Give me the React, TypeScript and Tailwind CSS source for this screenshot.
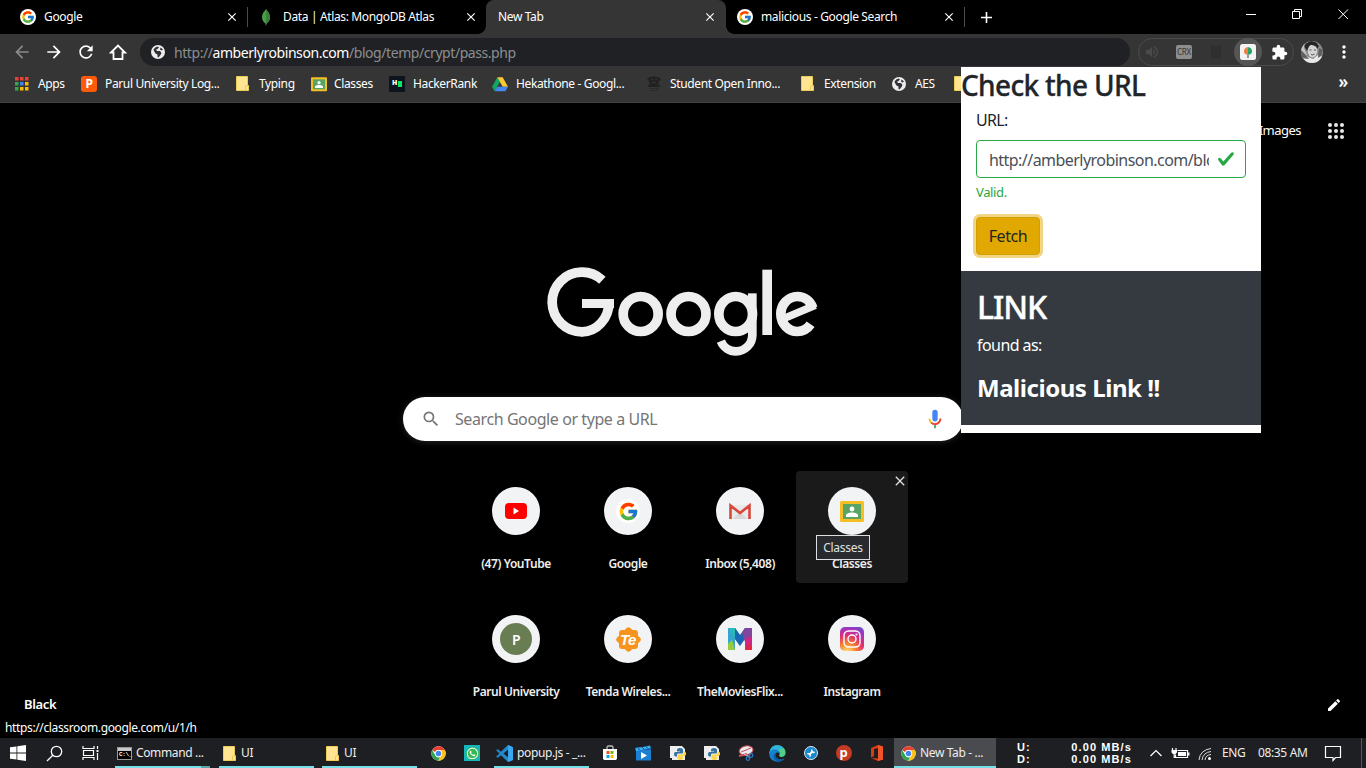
import React from "react";
import { FcGoogle } from "react-icons/fc";
import { FaWhatsapp } from "react-icons/fa";
import {
  MdArrowBack, MdArrowForward, MdRefresh, MdExtension,
  MdMoreVert, MdClose, MdSearch, MdEdit, MdVolumeUp, MdAdd,
} from "react-icons/md";

const GoogleIcon = ({ size = 16 }: { size?: number }) => (
  <span className={`flex items-center justify-center rounded-full bg-white ${size > 16 ? "size-6" : "size-4"}`}>
    <FcGoogle size={size > 16 ? 21 : 14} />
  </span>
);

const Globe = () => (
  <svg width="14" height="14" viewBox="0 0 14 14" className="shrink-0">
    <circle cx="7" cy="7" r="7" fill="#ececec" />
    <path d="M2.500 4.500Q4 2 6.500 1.500L8 2.500 6.500 4 5 4.500l1 1.500h3l1.500 2-1 2-2 2.500-1-.5V9.500L4.500 8.500 3 6z" fill="#303134" />
    <path d="M9.500 2.500 12 4.500l-1.500 1-1.500-1z" fill="#303134" />
  </svg>
);

const Home = () => (
  <svg width="18" height="18" viewBox="0 0 18 18" fill="none" stroke="#fff" strokeWidth="1.800" className="shrink-0">
    <path d="M2 9.500 9 2.500l7 7h-2.500V16h-9V9.500z" strokeLinejoin="miter" />
  </svg>
);

const Folder = () => (
  <svg width="13" height="15" viewBox="0 0 13 15" className="shrink-0">
    <path d="M.5.5h11v9h1v5H.5z" fill="#ffe591" stroke="#eecb55" />
    <path d="M9.500 14v-4h2V9" fill="none" stroke="#eecb55" />
  </svg>
);

const ClassIcon = ({ size }: { size: number }) => (
  <svg width={size} height={size} viewBox="0 0 24 24">
    <rect y="2" width="24" height="21" rx="1.500" fill="#f5be25" />
    <rect x="3" y="5" width="18" height="15" fill="#57a464" />
    <circle cx="12" cy="10" r="2.400" fill="#fff" />
    <path d="M6 18v-1.500c0-2 3-3 6-3s6 1 6 3V18z" fill="#fff" />
  </svg>
);

const AppsColor = () => {
  const c = ["#ea4335", "#ea4335", "#ea4335", "#34a853", "#4285f4", "#fbbc05", "#34a853", "#fbbc05", "#fbbc05"];
  return (
    <svg width="14" height="14">
      {c.map((f, i) => (
        <rect key={i} x={(i % 3) * 5} y={Math.floor(i / 3) * 5} width="3.500" height="3.500" fill={f} />
      ))}
    </svg>
  );
};

const Drive = () => (
  <svg width="16" height="16" viewBox="0 0 24 24">
    <path d="M8 2 0 16l4 7 8-14z" fill="#12a463" />
    <path d="M8 2h8l8 14h-8z" fill="#fcc934" />
    <path d="M8 16h16l-4 7H4z" fill="#4688f1" />
  </svg>
);

const Emblem = () => (
  <svg width="16" height="16" viewBox="0 0 16 16" fill="#222">
    <path d="M3 1h3l2-1 2 1h3l2 3-2 1v2l-2 1 3 1v2H2V9l3-1-2-1V5L1 4z" />
    <path d="M3 12h10v1H3zM4 14h8v1H4z" fill="#2a2a2a" />
    <path d="M5 3h2v1H5zM9 3h2v1H9zM6 6h4v1H6z" fill="#333" />
  </svg>
);

const Leaf = () => (
  <svg width="10" height="17" viewBox="0 0 10 17">
    <path d="M5 0c1 2 4 4 4 8.500 0 3-2 5-3.500 6l-.3 2h-.5l-.3-2C3 13.500 1 11.500 1 8.500 1 4 4 2 5 0z" fill="#499d4a" />
    <path d="M5 0c1 2 4 4 4 8.500 0 3-2 5-3.500 6H5z" fill="#3a8139" />
  </svg>
);

const Chrome = () => (
  <svg width="15" height="15" viewBox="0 0 24 24">
    <circle cx="12" cy="12" r="11.500" fill="#fff" />
    <path d="M12 .5a11.500 11.500 0 0 1 10 5.800H12a5.700 5.700 0 0 0-5.200 3.500L2 6.300A11.500 11.500 0 0 1 12 .5z" fill="#e94235" />
    <path d="M22 6.300A11.500 11.500 0 0 1 11.500 23.500l5.400-8.600A5.700 5.700 0 0 0 12 6.300z" fill="#fbc116" />
    <path d="M2 6.300 7 15a5.700 5.700 0 0 0 7.500 2.500l-3 6A11.500 11.500 0 0 1 2 6.300z" fill="#32a350" />
    <circle cx="12" cy="12" r="5.500" fill="#fff" />
    <circle cx="12" cy="12" r="4.400" fill="#4285f4" />
  </svg>
);

const VsCode = () => (
  <svg width="17" height="17" viewBox="0 0 24 24">
    <path d="m17 0 7 3v18l-7 3L7 14.500 2.500 18 0 16.700 5 12 0 7.300 2.500 6 7 9.500zm0 6.700L10.500 12l6.500 5.300z" fill="#2489ca" />
    <path d="m17 0 7 3v18l-7 3z" fill="#3aa7ee" />
  </svg>
);

const Py = () => (
  <span className="relative flex h-4 w-4 items-center justify-center">
    <svg width="16" height="16" className="absolute">
      <path d="M0 1h12l3 3v11H2V13H0z" fill="#eee" />
    </svg>
    <svg width="12" height="12" viewBox="0 0 24 24" className="absolute left-1 top-[3px]">
      <path d="M12 0c-5 0-6 2-6 4v3h6v1H3C1 8 0 10 0 12.500S1 17 3 17h3v-3c0-2 1-3 3-3h6c2 0 3-1 3-3V4c0-2-1-4-6-4z" fill="#3571a3" />
      <path d="M12 24c5 0 6-2 6-4v-3h-6v-1h9c2 0 3-2 3-4.500S23 7 21 7h-2v3c0 2-1 3-3 3h-6c-2 0-3 1-3 3v4c0 2 1 4 5 4z" fill="#ffd541" />
    </svg>
  </span>
);

const Store = () => (
  <svg width="16" height="16" viewBox="0 0 16 16">
    <path d="M5 5V2.500Q5 1 6.500 1h3Q11 1 11 2.500V5" fill="none" stroke="#bbb" strokeWidth="1.300" />
    <path d="M1 4h14v9.500l-1 1.500H2l-1-1.500z" fill="#fff" />
    <path d="M4.500 6h3v3h-3z" fill="#f25022" /><path d="M8.500 6h3v3h-3z" fill="#7fba00" />
    <path d="M4.500 10h3v3h-3z" fill="#00a4ef" /><path d="M8.500 10h3v3h-3z" fill="#ffb900" />
  </svg>
);

const Movies = () => (
  <svg width="17" height="16" viewBox="0 0 17 16">
    <path d="M1 5h15v10.500H1z" fill="#1c7fd2" />
    <path d="M1 5h15V2H1z" fill="#1560a4" />
    <path d="m0 3.500 15-3 .7 2.500L1 6z" fill="#38b3ee" />
    <path d="m3 3 2 2.300M7 2l2 2.300M11 1.300l2 2.200" stroke="#0f5192" />
    <path d="m6 7 6 3.500L6 14z" fill="#fff" />
  </svg>
);

const Snip = () => (
  <svg width="17" height="16" viewBox="0 0 17 16">
    <ellipse cx="9" cy="5.500" rx="7" ry="4.500" fill="#e9e9ee" stroke="#bf4450" transform="rotate(-12 9 5)" />
    <path d="m4 7 10-4" stroke="#c94d55" />
    <path d="m2 11 8-2" stroke="#d4505a" strokeWidth="2" />
    <path d="m7 9 6 3M13 8l-1 5" stroke="#bcc" />
    <circle cx="14" cy="10.500" r="1.800" fill="none" stroke="#2a7fd0" strokeWidth="1.200" />
    <circle cx="11" cy="13.500" r="1.800" fill="none" stroke="#2a7fd0" strokeWidth="1.200" />
  </svg>
);

const Edge = () => (
  <svg width="17" height="17" viewBox="0 0 24 24">
    <path d="M.5 13C1 4 6 .5 12 .5S23.500 5 23.500 11c0 4-3 6-6 6-3 0-4-2-2.500-4 1-4-4-6-8-5.500C4 8 2 9 .5 13z" fill="#4fcf8a" />
    <path d="M.5 13C1 4 6 .5 12 .5c4 0 7 2 9 4.500-4-1-6 0-7 4-2-2-5-2-8-1-3 1-4.500 2-5.500 5z" fill="#2db4e0" />
    <path d="M.5 13c0-4 3-6.500 7-6.500S15 9 15 13c-1-3-5-3-6 0-1 5 4 8 8 7.500 2 0 4-1 5-1.500-2 3-6 4.500-10 4.500C5 23.500.5 18.500.5 13z" fill="#1680c9" />
    <path d="M9 11c-4 3-3 9 2 12.500 4 .3 8-1 11-4.500-5 2.500-9.500 1.500-11.500-1.500C9 15 8.500 13 9 11z" fill="#0c59a4" />
  </svg>
);

const Wrench = () => (
  <svg width="16" height="16" viewBox="0 0 16 16">
    <circle cx="8" cy="8" r="6.500" fill="#1b87cf" stroke="#d8e9f5" />
    <path d="m6 10 4-4" stroke="#fff" strokeWidth="1.800" />
    <path d="M9.200 4.300a1.800 1.800 0 1 0 2.600 2.600M4.200 9.200a1.800 1.800 0 1 1 2.600 2.600" fill="none" stroke="#fff" strokeWidth="1.100" />
  </svg>
);

const Office = () => (
  <svg width="14" height="16" viewBox="0 0 14 16">
    <path d="M8 0 13 1.500v13L8 16l-7-3 7 .5V3L4 4v7l-3 1.500V3z" fill="#dc3b12" />
    <path d="m8 0 5 1.500v13L8 16z" fill="#f4532a" />
  </svg>
);

const GoogleWordmark = () => (
  <svg width="300" height="110" viewBox="0 0 900 330" fill="none" stroke="#eee" strokeWidth="29" role="img" aria-label="Google">
    <circle cx="156" cy="141" r="89.500" pathLength="360" strokeDasharray="224 136" transform="rotate(89 156 141)" />
    <ellipse cx="156" cy="141" rx="81" ry="89.500" pathLength="360" strokeDasharray="91 269" />
    <rect x="156" y="132" width="96" height="27" fill="#eee" stroke="none" />
    <circle cx="332" cy="177" r="52.500" />
    <circle cx="475.500" cy="177" r="52.500" />
    <ellipse cx="617" cy="177" rx="50.500" ry="52.500" />
    <rect x="654" y="115" width="26" height="126" fill="#eee" stroke="none" />
    <circle cx="618" cy="240" r="49" strokeWidth="26" pathLength="360" strokeDasharray="157 203" />
    <rect x="697" y="44" width="29" height="196" fill="#eee" stroke="none" />
    <ellipse cx="802" cy="177" rx="49.500" ry="52.500" pathLength="360" strokeDasharray="0 37 301 22" />
    <line x1="765" y1="189" x2="856" y2="151" strokeWidth="23" />
  </svg>
);

const Tab = ({ w, pad, icon, title, active }: { w: string; pad: string; icon?: React.ReactNode; title: string; active?: boolean }) => (
  <div className={`relative flex h-[34px] shrink-0 items-center ${w} ${pad} ${active ? "rounded-t-lg bg-[#353535] pr-[9px]" : "pr-2"}`}>
    {icon}
    <span className="flex-1 whitespace-nowrap">{title}</span>
    <MdClose size={14} />
    {active && (
      <>
        <span className="absolute -left-2 bottom-0 size-2 bg-[radial-gradient(circle_at_0_0,#000_7.5px,#353535_8px)]" />
        <span className="absolute -right-2 bottom-0 size-2 bg-[radial-gradient(circle_at_100%_0,#000_7.5px,#353535_8px)]" />
      </>
    )}
  </div>
);

const Bm = ({ w, gap, icon, label }: { w: string; gap: string; icon: React.ReactNode; label: string }) => (
  <div className={`flex shrink-0 items-center whitespace-nowrap ${w} ${gap}`}>
    {icon}
    <span>{label}</span>
  </div>
);

const Tile = ({ icon, label, hover }: { icon: React.ReactNode; label: string; hover?: boolean }) => (
  <div className={`relative flex h-28 w-28 flex-col items-center rounded pt-4 ${hover ? "bg-[#1a1a1a]" : ""}`}>
    <span className="flex size-12 items-center justify-center rounded-full bg-[#f1f3f4]">{icon}</span>
    <span className="mt-5 whitespace-nowrap text-[12px] leading-[18px] font-semibold tracking-[-0.035em] text-[#eee]">{label}</span>
    {hover && (
      <>
        <MdClose size={16} className="absolute right-0 top-[2px] text-[#e0e0e0]" />
        <span className="absolute left-5 top-16 flex h-[25px] w-[54px] items-center justify-center border border-[#dcdfe3] bg-[#292a2d] text-[12px] tracking-[-0.02em] text-[#dfe1e5]">
          {label}
        </span>
      </>
    )}
  </div>
);

const Task = ({ w, icon, label, active }: { w: string; icon: React.ReactNode; label: string; active?: boolean }) => (
  <div className={`flex h-[30px] shrink-0 items-center gap-1 border-b-2 border-[#76e0e8] pt-[2px] whitespace-nowrap ${w} ${active ? "bg-[#4a4b4f] pl-[7px]" : "pl-[2px]"}`}>
    {icon}
    <span className="text-[#eee]">{label}</span>
  </div>
);

const Slot = ({ w, children }: { w: string; children: React.ReactNode }) => (
  <span className={`flex shrink-0 items-center justify-center ${w}`}>{children}</span>
);

const instaGradient = "bg-[radial-gradient(circle_at_30%_105%,#fdd86b_5%,#f9812f_30%,#e0306f_55%,#a932ba_75%,#5258d4_100%)]";

export default function App() {
  return (
    <div className="relative flex h-[768px] w-[1366px] flex-col overflow-hidden bg-black font-['Noto_Sans','Open_Sans',sans-serif] text-[12px] tracking-[-0.03em] text-white">
      {/* Tab strip */}
      <header className="flex h-[34px] shrink-0 items-center">
        <Tab w="w-[247px]" pad="pl-5 gap-2" icon={<GoogleIcon />} title="Google" />
        <span className="h-5 w-px bg-[#4a4a4a]" />
        <Tab w="w-[238px]" pad="pl-[13px] gap-3" icon={<Leaf />} title="Data | Atlas: MongoDB Atlas" />
        <Tab w="w-[240px]" pad="pl-3" title="New Tab" active />
        <Tab w="w-[238px]" pad="pl-[11px] gap-2" icon={<GoogleIcon />} title="malicious - Google Search" />
        <span className="h-5 w-px bg-[#4a4a4a]" />
        <MdAdd size={19} className="ml-3" />
        <div className="ml-auto flex h-full items-center pb-[6px]">
          <svg width="116" height="14" viewBox="0 0 116 14" fill="none" stroke="#fff" className="mr-4">
            <path d="M12 7.500h10M58.500 4.500h7v7h-7zM60.500 4.500v-2h7v7h-2" />
            <path d="m104.500 2.500 9.500 9.500M114 2.500 104.500 12" />
          </svg>
        </div>
      </header>

      {/* Toolbar */}
      <div className="flex h-[33px] shrink-0 items-center bg-[#353535] pl-3 pt-[3px]">
        <MdArrowBack size={20} className="mr-3 text-[#8a8a8a]" />
        <MdArrowForward size={20} className="mr-3" />
        <MdRefresh size={20} className="mr-3" />
        <span className="ml-px mr-[13px]"><Home /></span>
        <div className="flex h-7 w-[990px] items-center rounded-full bg-[#202124] pl-[11px]">
          <Globe />
          <span className="ml-[9px] text-[14px] tracking-[-0.031em] text-[#8b8e91]">
            http://<span className="text-white">amberlyrobinson.com</span>/blog/temp/crypt/pass.php
          </span>
        </div>
        <div className="ml-2 flex h-7 w-[156px] items-center rounded-full border border-[#4b4b4b]">
          <Slot w="w-[26px]"><MdVolumeUp size={16} className="text-[#4a4a4a]" /></Slot>
          <Slot w="w-[38px]"><span className="flex h-[14px] w-4 items-center justify-center rounded-[2px] bg-[#8e8e8e] text-[8px] tracking-tight text-[#333]">CRX</span></Slot>
          <Slot w="w-[26px]">
            <svg width="12" height="15" fill="#2f2f2f"><path d="M1 0h3l2 3 2-3h3v14H1z" /></svg>
          </Slot>
          <span className="-my-px ml-[5px] flex size-7 shrink-0 items-center justify-center rounded-full bg-[#555]">
            <svg width="16" height="16" viewBox="0 0 16 16">
              <rect width="16" height="16" rx="2.500" fill="#f3f3f3" />
              <path d="M8 3a4.200 4.200 0 0 0-3 7l3 1z" fill="#f08048" />
              <path d="M8 3a4.200 4.200 0 0 1 3 7l-3 1z" fill="#27a567" />
              <path d="M7 10.500h2V14H7z" fill="#999" />
            </svg>
          </span>
          <Slot w="w-[35px]"><MdExtension size={17} /></Slot>
        </div>
        <svg width="22" height="22" viewBox="0 0 22 22" className="ml-[7px]">
          <clipPath id="avatar"><circle cx="11" cy="11" r="11" /></clipPath>
          <g clipPath="url(#avatar)">
            <rect width="22" height="22" fill="#8b8b8b" />
            <path d="M3 5Q7-1 14 1l4 4-2 3-7-2-3 4z" fill="#292929" />
            <path d="M0 0h4l-1 7 3 7-6-1z" fill="#c4c4c4" />
            <ellipse cx="11.500" cy="10" rx="4.800" ry="6.500" fill="#d4d4d4" />
            <path d="M6 9Q6 3 11 4l6 2-1-4-6-2-5 3z" fill="#252525" />
            <path d="M8.500 9h2M13 9h2M10 13.500q2 1 3.500-.5" stroke="#555" fill="none" />
            <path d="M0 15q5-2 7 1l5 2 5-4 5 2v6H0z" fill="#e8e8e8" />
            <path d="m0 9 3 3 5 6-8-1zM18 7l4 2-2 6-3 2z" fill="#606060" />
          </g>
        </svg>
        <MdMoreVert size={20} className="ml-[11px]" />
      </div>

      {/* Bookmarks */}
      <div className="flex h-9 shrink-0 items-center border-b border-[#424242] bg-[#353535] pl-[15px] pb-[2px]">
        <Bm w="w-[66px]" gap="gap-[9px]" icon={<AppsColor />} label="Apps" />
        <Bm w="w-[155px]" gap="gap-2" icon={<span className="flex size-4 items-center justify-center rounded-[3px] bg-[#ff5a0a] text-[12px] font-bold">P</span>} label="Parul University Log..." />
        <Bm w="w-[75px]" gap="gap-[10px]" icon={<Folder />} label="Typing" />
        <Bm w="w-[78px]" gap="gap-[7px]" icon={<ClassIcon size={16} />} label="Classes" />
        <Bm w="w-[103px]" gap="gap-2" icon={<span className="flex size-4 items-center justify-center gap-px bg-[#0e141e] text-[7px] font-black">H<span className="h-[6px] w-1 bg-[#00ea64]" /></span>} label="HackerRank" />
        <Bm w="w-[154px]" gap="gap-2" icon={<Drive />} label="Hekathone - Googl..." />
        <Bm w="w-[155px]" gap="gap-2" icon={<Emblem />} label="Student Open Inno..." />
        <Bm w="w-[91px]" gap="gap-[10px]" icon={<Folder />} label="Extension" />
        <Bm w="w-[62px]" gap="gap-[9px]" icon={<Globe />} label="AES" />
        <Folder />
        <span className="ml-auto mr-[18px] pb-1 text-[17px] font-semibold">»</span>
      </div>

      {/* New tab page */}
      <main className="flex h-[635px] shrink-0 flex-col items-center">
        <div className="flex h-14 w-full shrink-0 items-center justify-end pr-[22px]">
          <span className="text-[13px] tracking-[-0.04em]">Images</span>
          <svg width="16" height="16" fill="#e8e8e8" className="ml-[27px]">
            {[0, 1, 2, 3, 4, 5, 6, 7, 8].map((i) => (
              <circle key={i} cx={2 + (i % 3) * 6} cy={2 + Math.floor(i / 3) * 6} r="2" />
            ))}
          </svg>
        </div>
        <div className="mt-24 mr-[6px] h-[110px] w-[300px] shrink-0"><GoogleWordmark /></div>
        <div className="mt-8 flex h-11 w-[560px] shrink-0 items-center rounded-full bg-white pl-[18px] pr-[18px] shadow-[0_1px_6px_rgba(255,255,255,0.15)]">
          <MdSearch size={20} className="text-[#757575]" />
          <span className="ml-[14px] flex-1 text-[16px] tracking-[-0.026em] text-[#757575]">Search Google or type a URL</span>
          <svg width="20" height="20" viewBox="0 0 24 24">
            <path d="M12 15a3.200 3.200 0 0 0 3.200-3.200V4.200a3.200 3.200 0 0 0-6.400 0v7.600A3.200 3.200 0 0 0 12 15z" fill="#4285f4" />
            <path d="M11 18.500h2V23h-2z" fill="#34a853" />
            <path d="M5.500 11.500a6.500 6.500 0 0 0 2 5" fill="none" stroke="#fbbc04" strokeWidth="2.200" />
            <path d="M7.500 16.300a6.500 6.500 0 0 0 11-4.800" fill="none" stroke="#ea4335" strokeWidth="2.200" />
          </svg>
        </div>
        <div className="mt-[30px] ml-[2px] grid shrink-0 grid-cols-4 gap-y-4">
          <Tile label="(47) YouTube" icon={
            <svg width="22" height="16" viewBox="0 0 22 16"><rect width="22" height="16" rx="4" fill="#f00" /><path d="m8.500 4.500 5.500 3.500-5.500 3.500z" fill="#fff" /></svg>} />
          <Tile label="Google" icon={<GoogleIcon size={24} />} />
          <Tile label="Inbox (5,408)" icon={
            <svg width="22" height="17" viewBox="0 0 22 17">
              <path d="M1 2h20v14H1z" fill="#e9e9e9" />
              <path d="m4 16 7-7 7 7z" fill="#d8d8d8" />
              <path d="M1.500 16V2.500L11 10l9.500-7.500V16" fill="none" stroke="#d6493c" strokeWidth="2.600" />
            </svg>} />
          <Tile label="Classes" hover icon={<ClassIcon size={24} />} />
          <Tile label="Parul University" icon={<span className="flex size-8 items-center justify-center rounded-full bg-[#697d52] text-[14px] font-semibold">P</span>} />
          <Tile label="Tenda Wireles..." icon={
            <span className="relative flex size-6 items-center justify-center">
              <span className="absolute size-[19px] rounded-[3px] bg-[#f7941d]" />
              <span className="absolute size-[19px] rotate-45 rounded-[3px] bg-[#f7941d]" />
              <span className="relative font-['Liberation_Sans',sans-serif] text-[15px] leading-none font-bold italic">Te</span>
            </span>} />
          <Tile label="TheMoviesFlix..." icon={
            <svg width="24" height="22" viewBox="0 0 24 22">
              <path d="M0 0h7l5 7v11L7 11v11H0z" fill="#29b9bb" />
              <path d="m0 0 7 11v11L0 13z" fill="#36a4ce" />
              <path d="m0 16 4-4 3 10H0z" fill="#9dc93a" />
              <path d="m7 0 5 7 5-7v11l-5 7-5-7z" fill="#1966b2" />
              <path d="M17 0h7v11l-7 3-3-9z" fill="#80459c" />
              <path d="M17 11l7-3v14h-7z" fill="#cf2787" />
              <path d="m17 22 4-8 3 8z" fill="#e22642" />
            </svg>} />
          <Tile label="Instagram" icon={
            <span className={`flex size-6 items-center justify-center rounded-[5px] ${instaGradient}`}>
              <svg width="18" height="18" fill="none" stroke="#fff" strokeWidth="1.400"><rect x="1" y="1" width="16" height="16" rx="4.500" /><circle cx="9" cy="9" r="4" /><circle cx="13.500" cy="4.500" r=".4" /></svg>
            </span>} />
        </div>
        <div className="-mt-[17px] flex w-full items-end justify-between pl-6 pr-[24px]">
          <span className="text-[13px] leading-5 font-semibold">Black</span>
          <MdEdit size={16} className="mb-px" />
        </div>
      </main>

      <div className="absolute left-0 top-[718px] bg-black px-[5px] text-[12px] leading-5 tracking-[-0.03em]">https://classroom.google.com/u/1/h</div>

      {/* Taskbar */}
      <footer className="flex h-[30px] shrink-0 items-center bg-[#1e1f22]">
        <Slot w="w-9">
          <svg width="16" height="16" fill="#fff"><path d="m0 2.300 6.500-.9v6.200H0zM7.300 1.300 16 0v7.600H7.300zM0 8.400h6.500v6.200L0 13.700zM7.300 8.400H16V16l-8.700-1.200z" /></svg>
        </Slot>
        <Slot w="w-9">
          <svg width="17" height="17" fill="none" stroke="#fff" strokeWidth="1.300"><circle cx="10.500" cy="6.500" r="5.200" /><path d="M6.800 10.200 1 16" /></svg>
        </Slot>
        <Slot w="w-9">
          <svg width="17" height="16" fill="none" stroke="#fff" strokeWidth="1.200"><path d="M1 1v2.500h11V1M1 15v-2.500h11V15M1.500 5.500h10v5h-10zM15.500 1v3M15.500 8v7" /><path d="M14.500 5h2v2h-2z" fill="#fff" stroke="none" /></svg>
        </Slot>
        <span className="w-[7px]" />
        <Task w="w-[86px]" label="Command ..." icon={
          <span className="flex h-[13px] w-4 flex-col bg-black font-['Liberation_Mono',monospace] text-[6px] leading-[7px] font-bold outline outline-1 -outline-offset-1 outline-[#9a9a9a]">
            <span className="h-[4px] w-full bg-[#c9c9c9]" />
            <span className="pl-[2px]">C:\_</span>
          </span>} />
        <span className="mr-[9px] h-[30px] w-[9px] border-b-2 border-[#58a5ab]" />
        <Task w="w-[95px]" label="UI" icon={<span className="flex w-4 justify-center"><Folder /></span>} />
        <span className="w-2" />
        <Task w="w-[95px]" label="UI" icon={<span className="flex w-4 justify-center"><Folder /></span>} />
        <span className="w-1" />
        <Slot w="w-[34px]"><Chrome /></Slot>
        <Slot w="w-[34px]"><span className="flex size-4 items-center justify-center bg-[#17b6bd]"><FaWhatsapp size={13} className="rounded-full bg-[#35b955]" /></span></Slot>
        <span className="w-[5px]" />
        <Task w="w-[95px]" label="popup.js - _..." icon={<VsCode />} />
        <span className="w-1" />
        <Slot w="w-[33px]"><Store /></Slot>
        <Slot w="w-[35px]"><Movies /></Slot>
        <Slot w="w-[34px]"><Py /></Slot>
        <Slot w="w-[34px]"><Py /></Slot>
        <Slot w="w-[32px]"><Snip /></Slot>
        <Slot w="w-[33px]"><Edge /></Slot>
        <Slot w="w-[33px]"><Wrench /></Slot>
        <Slot w="w-[33px]"><span className="flex size-4 items-center justify-center rounded-full bg-[#c43a22] pb-[2px] text-[13px] leading-none font-bold">p</span></Slot>
        <Slot w="w-[34px]"><Office /></Slot>
        <Task w="w-[102px]" label="New Tab - ..." active icon={<Chrome />} />
        <div className="ml-[21px] flex w-[115px] flex-col font-['Liberation_Sans',sans-serif] text-[11px] leading-3 font-bold tracking-[0.1em]">
          <span className="flex justify-between"><span>U:</span><span>0.00 MB/s</span></span>
          <span className="flex justify-between"><span>D:</span><span>0.00 MB/s</span></span>
        </div>
        <svg width="68" height="20" viewBox="0 0 68 20" fill="none" stroke="#fff" strokeWidth="1.200" className="ml-4 shrink-0">
          <path d="m2.500 13 5.500-5.500 5.500 5.500" />
          <path d="M29.500 7.500h10v7h-12v-3M24.500 5v2M28 5v2" />
          <path d="M23.500 7h5.500v2.500l-1.500 1.500h-2.500L23.500 9.500zM30 9h8v4h-8zM40 9.500h1.500v3H40z" fill="#fff" stroke="none" />
          <path d="M26.200 10.500v4h2" />
          <path d="M51 17Q52 7 63 5.500M54 17q1-7.500 9-8.500M57 17q.5-5 6-5.500" stroke="#ddd" strokeWidth="1" />
          <circle cx="61.500" cy="15.500" r="1.500" fill="#fff" stroke="none" />
        </svg>
        <span className="ml-[6px] w-9 shrink-0 text-[#eee]">ENG</span>
        <span className="whitespace-nowrap text-[#eee]">08:35 AM</span>
        <svg width="18" height="17" fill="none" stroke="#fff" strokeWidth="1.200" className="ml-auto mr-[19px]"><path d="M1.500 1.500h15v11h-5l-2.500 3v-3H1.500z" /></svg>
        <span className="mr-1 h-full w-px bg-[#55565a]" />
      </footer>

      {/* Extension popup */}
      <section className="absolute left-[961px] top-[67px] flex h-[366px] w-[300px] flex-col bg-white text-[#212529]">
        <h1 className="mt-[1px] whitespace-nowrap text-[28px] leading-[34px] font-medium tracking-[-0.024em] [-webkit-text-stroke:0.3px]">Check the URL</h1>
        <div className="flex flex-col items-start px-[15px]">
          <label className="mt-[6px] text-[16px] leading-6 tracking-[-0.04em]">URL:</label>
          <div className="mt-[8px] flex h-[38px] w-[270px] items-center rounded border border-[#28a745] pl-3 pr-[9px] text-[16px] text-[#495057]">
            <span className="mt-px w-[220px] overflow-hidden whitespace-nowrap tracking-[-0.034em]">http://amberlyrobinson.com/blog/temp</span>
            <svg width="18" height="18" viewBox="0 0 8 8" className="ml-[8px] shrink-0"><path fill="#28a745" d="M2.300 6.730.6 4.530c-.4-1.040.46-1.400 1.100-.8l1.100 1.400 3.400-3.800c.6-.63 1.600-.27 1.200.7l-4 4.600c-.43.5-.8.4-1.100.1z" /></svg>
          </div>
          <span className="mt-[4px] text-[13px] leading-5 text-[#28a745]">Valid.</span>
          <button className="mt-[15px] h-[38px] w-16 rounded border border-[#d39e00] bg-[#e0a800] text-[16px] tracking-[-0.025em] text-[#212529] shadow-[0_0_0_3px_#efd584]">Fetch</button>
        </div>
        <div className="mt-4 flex h-[154px] flex-col bg-[#343a40] pl-4 text-white">
          <h2 className="mt-[17px] text-[32px] leading-[38px] font-medium tracking-[-0.035em] [-webkit-text-stroke:0.4px]">LINK</h2>
          <span className="mt-[7px] text-[16px] leading-6 tracking-[-0.035em]">found as:</span>
          <strong className="mt-[16px] text-[24px] leading-[30px] font-bold tracking-[-0.019em]">Malicious Link !!</strong>
        </div>
      </section>
    </div>
  );
}
